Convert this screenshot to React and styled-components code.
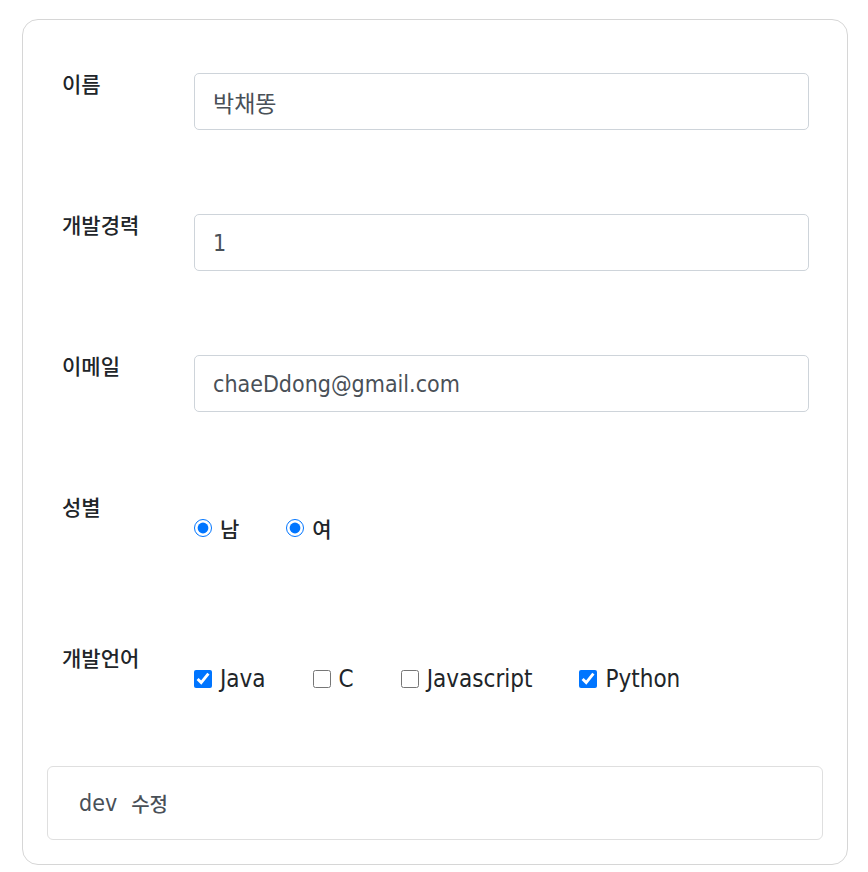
import React from "react";
import styled, { createGlobalStyle } from "styled-components";

const GlobalStyle = createGlobalStyle`
  body {
    margin: 0;
    background: #fff;
    font-family: "DejaVu Sans Condensed", "DejaVu Sans", "Noto Sans CJK KR", sans-serif;
    color: #212529;
  }
`;

const Page = styled.div`
  padding: 19px 0 0 22px;
`;

const Card = styled.div`
  width: 826px;
  box-sizing: border-box;
  border: 1px solid #d6d6d6;
  border-radius: 16px;
  padding: 24px;
`;

const Form = styled.form`
  padding: 29px 14px 0 15px;
`;

const Row = styled.div`
  display: flex;
  align-items: flex-start;
  margin-bottom: ${(p) => p.$gap}px;
`;

const Label = styled.label`
  flex: 0 0 132px;
  font-size: 21px;
  line-height: 24px;
  font-weight: 500;
  color: #212529;
`;

const Input = styled.input`
  flex: 1;
  min-width: 0;
  height: 57px;
  box-sizing: border-box;
  border: 1px solid #ced4da;
  border-radius: 5px;
  padding: 0 18px;
  font-family: inherit;
  font-size: 23px;
  color: #495057;
  outline: none;
`;

const Options = styled.div`
  display: flex;
  align-items: center;
  height: 24px;
  margin-top: 20px;
`;

const Option = styled.label`
  display: flex;
  align-items: center;
  margin-right: 47px;
  font-size: ${(p) => (p.$ko ? 21 : 24)}px;
  font-weight: ${(p) => (p.$ko ? 500 : "normal")};
  color: #212529;

  input {
    width: 18px;
    height: 18px;
    margin: 0 8px 0 0;
    accent-color: #0075ff;
  }
`;

const Footer = styled.div`
  display: flex;
  align-items: center;
  gap: 14px;
  height: 74px;
  box-sizing: border-box;
  border: 1px solid #dfdfdf;
  border-radius: 6px;
  padding: 0 31px;
  font-size: 23px;
  color: #495057;
`;

const FooterKo = styled.span`
  font-size: 20px;
  font-weight: 500;
`;

const languages = [
  { name: "Java", checked: true },
  { name: "C", checked: false },
  { name: "Javascript", checked: false },
  { name: "Python", checked: true },
];

export default function App() {
  return (
    <Page>
      <GlobalStyle />
      <Card>
        <Form>
          <Row $gap={84}>
            <Label>이름</Label>
            <Input defaultValue="박채똥" />
          </Row>
          <Row $gap={84}>
            <Label>개발경력</Label>
            <Input defaultValue="1" />
          </Row>
          <Row $gap={84}>
            <Label>이메일</Label>
            <Input defaultValue="chaeDdong@gmail.com" />
          </Row>
          <Row $gap={107}>
            <Label>성별</Label>
            <Options>
              <Option $ko>
                <input type="radio" name="male" defaultChecked />남
              </Option>
              <Option $ko>
                <input type="radio" name="female" defaultChecked />여
              </Option>
            </Options>
          </Row>
          <Row $gap={75}>
            <Label>개발언어</Label>
            <Options>
              {languages.map((l) => (
                <Option key={l.name}>
                  <input type="checkbox" defaultChecked={l.checked} />
                  {l.name}
                </Option>
              ))}
            </Options>
          </Row>
        </Form>
        <Footer>
          <span>dev</span>
          <FooterKo>수정</FooterKo>
        </Footer>
      </Card>
    </Page>
  );
}
